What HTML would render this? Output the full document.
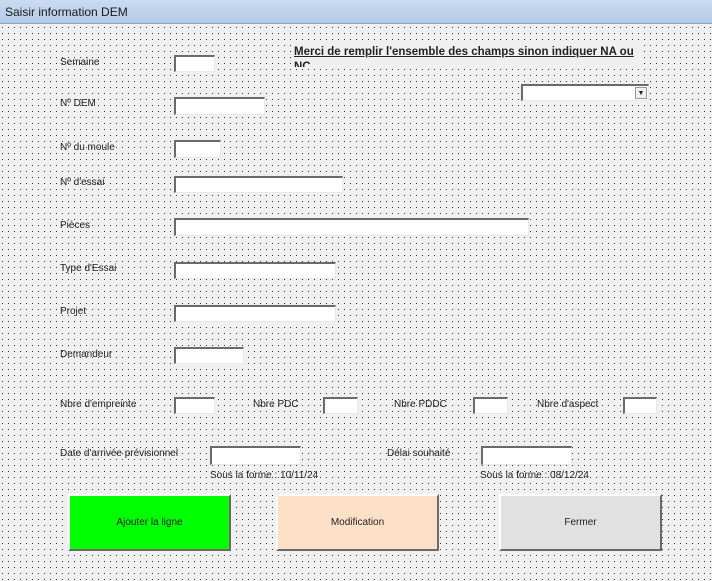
<!DOCTYPE html>
<html><head><meta charset="utf-8"><style>
*{margin:0;padding:0;box-sizing:border-box}
body{width:712px;height:581px;overflow:hidden;background:#f0f0f0;position:relative;font-family:"Liberation Sans",sans-serif;font-size:10px;color:#222}
#title{position:absolute;left:0;top:0;width:712px;height:24px;background:linear-gradient(#c9dcf0,#b4cbe6);border-bottom:1px solid #8aa3c0;font-size:12px;color:#1a1a1a;padding:5px 0 0 5px}
#grid{position:absolute;left:0;top:25px}
.l{position:absolute;white-space:nowrap;margin-top:1px}
.t{position:absolute;background:#fff;border-top:2px solid #6a6a6a;border-left:2px solid #6a6a6a;border-right:1px solid #e8e8e8;border-bottom:1px solid #e8e8e8}
.b{position:absolute;top:494px;height:57px;width:163px;border-top:2px solid #fff;border-left:2px solid #fff;border-right:2px solid #6a6a6a;border-bottom:2px solid #6a6a6a;display:flex;align-items:center;justify-content:center;font-size:10px}
</style></head><body>
<div id="title">Saisir information DEM</div>
<svg id="grid" width="712" height="556"><defs><pattern id="p" x="2" y="2" width="6" height="6" patternUnits="userSpaceOnUse"><rect width="1" height="1" fill="#333"/></pattern></defs><rect width="712" height="556" fill="url(#p)"/></svg>

<div class="l" style="left:292px;top:45px;width:350px;height:22px;overflow:hidden;background:#f0f0f0;font-weight:bold;font-size:11.5px;line-height:15px;padding-left:2px;text-decoration:underline;white-space:normal;margin-top:0">Merci de remplir l'ensemble des champs sinon indiquer NA ou NC</div>
<div class="t" style="left:521px;top:84px;width:128px;height:17px"><div style="position:absolute;right:1px;top:1px;width:12px;height:12px;background:#f0f0f0;border:1px solid #999;font-size:7px;text-align:center;line-height:11px">▼</div></div>

<div class="l" style="left:60px;top:56px">Semaine</div><div class="t" style="left:174px;top:55px;width:41px;height:17px"></div>
<div class="l" style="left:60px;top:97px">Nº DEM</div><div class="t" style="left:174px;top:97px;width:91px;height:18px"></div>
<div class="l" style="left:60px;top:141px">Nº du moule</div><div class="t" style="left:174px;top:140px;width:47px;height:18px"></div>
<div class="l" style="left:60px;top:176px">Nº d'essai</div><div class="t" style="left:174px;top:176px;width:169px;height:17px"></div>
<div class="l" style="left:60px;top:219px">Pièces</div><div class="t" style="left:174px;top:218px;width:355px;height:18px"></div>
<div class="l" style="left:60px;top:262px">Type d'Essai</div><div class="t" style="left:174px;top:262px;width:162px;height:17px"></div>
<div class="l" style="left:60px;top:305px">Projet</div><div class="t" style="left:174px;top:305px;width:162px;height:17px"></div>
<div class="l" style="left:60px;top:348px">Demandeur</div><div class="t" style="left:174px;top:347px;width:70px;height:17px"></div>

<div class="l" style="left:60px;top:398px">Nbre d'empreinte</div><div class="t" style="left:174px;top:397px;width:41px;height:17px"></div>
<div class="l" style="left:253px;top:398px">Nbre PDC</div><div class="t" style="left:323px;top:397px;width:35px;height:17px"></div>
<div class="l" style="left:394px;top:398px">Nbre PDDC</div><div class="t" style="left:473px;top:397px;width:35px;height:17px"></div>
<div class="l" style="left:537px;top:398px">Nbre d'aspect</div><div class="t" style="left:623px;top:397px;width:34px;height:17px"></div>

<div class="l" style="left:60px;top:447px">Date d'arrivée prévisionnel</div><div class="t" style="left:210px;top:446px;width:91px;height:19px"></div>
<div class="l" style="left:387px;top:447px">Délai souhaité</div><div class="t" style="left:481px;top:446px;width:91px;height:19px"></div>
<div class="l" style="left:210px;top:469px">Sous la forme : 10/11/24</div>
<div class="l" style="left:480px;top:469px">Sous la forme : 08/12/24</div>

<div class="b" style="left:68px;background:#00ff00">Ajouter la ligne</div>
<div class="b" style="left:276px;background:#fde0c8">Modification</div>
<div class="b" style="left:499px;background:#e1e1e1">Fermer</div>
</body></html>
